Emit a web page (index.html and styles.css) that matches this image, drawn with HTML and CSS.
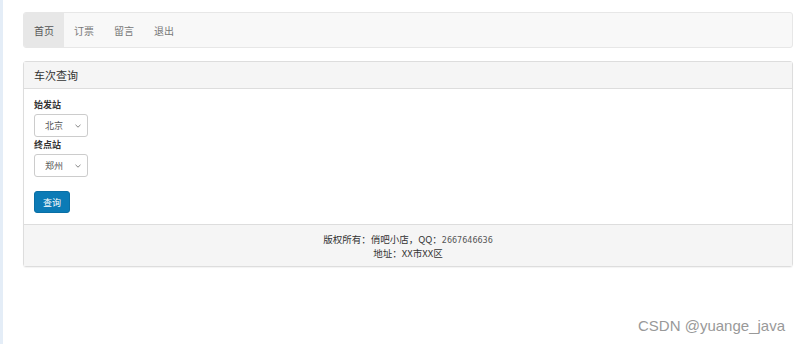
FILE: index.html
```html
<!DOCTYPE html>
<html lang="zh-CN">
<head>
  <meta charset="UTF-8">
  <title>车次查询</title>
  <link rel="stylesheet" href="styles.css">
</head>
<body>
  <div class="page">
    <nav class="navbar">
      <a class="nav-item active" href="#">首页</a>
      <a class="nav-item" href="#">订票</a>
      <a class="nav-item" href="#">留言</a>
      <a class="nav-item" href="#">退出</a>
    </nav>

    <div class="panel">
      <div class="panel-heading">车次查询</div>
      <form class="panel-body">
        <label class="field-label">始发站</label>
        <span class="select-wrap">
          <select class="station">
            <option>北京</option>
          </select>
          <svg class="chevron" width="6" height="4" viewBox="0 0 6 4"><path d="M0.5 0.8 L3 3.2 L5.5 0.8" fill="none" stroke="#777" stroke-width="0.9"/></svg>
        </span>
        <label class="field-label">终点站</label>
        <span class="select-wrap">
          <select class="station">
            <option>郑州</option>
          </select>
          <svg class="chevron" width="6" height="4" viewBox="0 0 6 4"><path d="M0.5 0.8 L3 3.2 L5.5 0.8" fill="none" stroke="#777" stroke-width="0.9"/></svg>
        </span>
        <button type="button" class="btn">查询</button>
      </form>
      <div class="panel-footer">
        <div>版权所有：俏吧小店，QQ：<span class="num">2667646636</span></div>
        <div>地址：XX市XX区</div>
      </div>
    </div>
  </div>
  <div class="watermark">CSDN @yuange_java</div>
</body>
</html>
```

FILE: styles.css
```css
body {
  margin: 0;
  background: #fff;
  font-family: "Noto Sans CJK SC", "Liberation Sans", sans-serif;
  color: #333;
  min-height: 344px;
  border-left: 3px solid #e4edf7;
  box-sizing: border-box;
}
.page {
  padding: 12px 7px 0 20px;
}
.navbar {
  display: flex;
  height: 34px;
  background: #f8f8f8;
  border: 1px solid #e7e7e7;
  border-radius: 3px;
  overflow: hidden;
}
.nav-item {
  display: flex;
  align-items: center;
  padding: 0 10px;
  font-size: 10px;
  color: #777;
  text-decoration: none;
}
.nav-item.active {
  background: #e7e7e7;
  color: #555;
}
.panel {
  margin-top: 13px;
  border: 1px solid #ddd;
  border-radius: 3px;
  box-shadow: 0 1px 1px rgba(0,0,0,0.05);
}
.panel-heading {
  height: 26px;
  line-height: 26px;
  padding: 0 10px;
  background: #f5f5f5;
  border-bottom: 1px solid #ddd;
  font-size: 11px;
  color: #333;
}
.panel-body {
  display: flex;
  flex-direction: column;
  align-items: flex-start;
  padding: 9px 10px 11px;
}
.field-label {
  font-size: 9px;
  font-weight: bold;
  line-height: 13px;
  margin-bottom: 3px;
}
.select-wrap {
  position: relative;
  display: block;
  margin-bottom: 1px;
}
.station {
  display: block;
  width: 54px;
  height: 23px;
  padding: 0 0 0 10px;
  font-size: 9px;
  font-family: "Noto Sans CJK SC", sans-serif;
  color: #555;
  background: #fff;
  border: 1px solid #ccc;
  border-radius: 3px;
  appearance: none;
  -webkit-appearance: none;
}
.chevron {
  position: absolute;
  right: 7px;
  top: 10px;
  pointer-events: none;
}
.btn {
  margin-top: 13px;
  width: 36px;
  height: 22px;
  padding: 0;
  font-size: 9px;
  font-family: "Noto Sans CJK SC", sans-serif;
  color: #fff;
  background: #0c7bb6;
  border: 1px solid #0a6fa5;
  border-radius: 3px;
}
.panel-footer {
  padding: 8px 10px 6px;
  background: #f5f5f5;
  border-top: 1px solid #ddd;
  text-align: center;
  font-size: 9.5px;
  line-height: 13px;
  color: #333;
}
.num {
  font-family: "DejaVu Sans", sans-serif;
  font-size: 8px;
  color: #555;
}
.watermark {
  position: absolute;
  right: 15px;
  bottom: 10px;
  font-family: "Liberation Sans", sans-serif;
  font-size: 15px;
  color: #999;
}
```
